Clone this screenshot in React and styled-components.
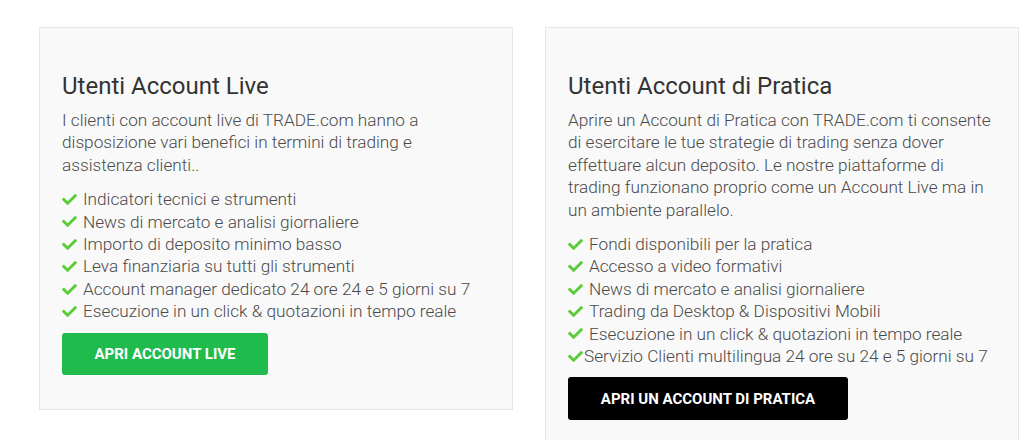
import React from 'react';
import styled, { createGlobalStyle } from 'styled-components';
import { FaCheck } from 'react-icons/fa';

const GlobalStyle = createGlobalStyle`
  html, body {
    margin: 0;
    padding: 0;
    background: #fff;
  }
  body {
    font-family: Roboto, "Liberation Sans", sans-serif;
  }
`;

const Page = styled.div`
  display: grid;
  grid-template-columns: 474px 474px;
  column-gap: 32px;
  align-items: start;
  padding: 27px 0 0 39px;
  height: 440px;
  box-sizing: border-box;
  overflow: hidden;
`;

const Card = styled.div`
  background: #f9f9f9;
  border: 1px solid #e6e6e8;
  padding: 43px 24px 34px 22px;
`;

const Title = styled.h2`
  margin: 0 0 8px;
  font-family: Roboto, sans-serif;
  font-weight: 400;
  font-size: 24px;
  line-height: 30px;
  color: #333;
`;

const Text = styled.p`
  margin: 0 0 12px;
  font-weight: 300;
  font-size: 17.2px;
  line-height: 22.4px;
  color: #4a4a4a;
`;

const List = styled.ul`
  list-style: none;
  margin: 0 0 10px;
  padding: 0;
`;

const Item = styled.li`
  display: flex;
  align-items: center;
  font-weight: 300;
  font-size: 17.2px;
  line-height: 22.4px;
  color: #4a4a4a;
  white-space: nowrap;

  svg {
    color: #5ccb3a;
    font-size: 15px;
    flex: none;
    margin-right: ${({ $tight }) => ($tight ? '1px' : '6px')};
  }
`;

const Button = styled.a`
  display: inline-flex;
  align-items: center;
  justify-content: center;
  width: ${({ $w }) => $w}px;
  height: ${({ $h }) => $h}px;
  background: ${({ $bg }) => $bg};
  color: #fff;
  border-radius: 3px;
  font-weight: 700;
  font-size: 15px;
  text-transform: uppercase;
  text-decoration: none;
`;

const cards = [
  {
    title: 'Utenti Account Live',
    text: 'I clienti con account live di TRADE.com hanno a disposizione vari benefici in termini di trading e assistenza clienti..',
    items: [
      'Indicatori tecnici e strumenti',
      'News di mercato e analisi giornaliere',
      'Importo di deposito minimo basso',
      'Leva finanziaria su tutti gli strumenti',
      'Account manager dedicato 24 ore 24 e 5 giorni su 7',
      'Esecuzione in un click & quotazioni in tempo reale',
    ],
    button: 'Apri account live',
    bg: '#1fbb4c',
    w: 206,
    h: 42,
  },
  {
    title: 'Utenti Account di Pratica',
    text: "Aprire un Account di Pratica con TRADE.com ti consente di esercitare le tue strategie di trading senza dover effettuare alcun deposito. Le nostre piattaforme di trading funzionano proprio come un Account Live ma in un ambiente parallelo.",
    items: [
      'Fondi disponibili per la pratica',
      'Accesso a video formativi',
      'News di mercato e analisi giornaliere',
      'Trading da Desktop & Dispositivi Mobili',
      'Esecuzione in un click & quotazioni in tempo reale',
      'Servizio Clienti multilingua 24 ore su 24 e 5 giorni su 7',
    ],
    tightLast: true,
    button: 'Apri un account di pratica',
    bg: '#000',
    w: 280,
    h: 43,
  },
];

function App() {
  return (
    <>
      <GlobalStyle />
      <Page>
        {cards.map((c) => (
          <Card key={c.title}>
            <Title>{c.title}</Title>
            <Text>{c.text}</Text>
            <List>
              {c.items.map((it, i) => (
                <Item key={it} $tight={c.tightLast && i === c.items.length - 1}>
                  <FaCheck />
                  {it}
                </Item>
              ))}
            </List>
            <Button href="#" $bg={c.bg} $w={c.w} $h={c.h}>
              {c.button}
            </Button>
          </Card>
        ))}
      </Page>
    </>
  );
}

export default App;
